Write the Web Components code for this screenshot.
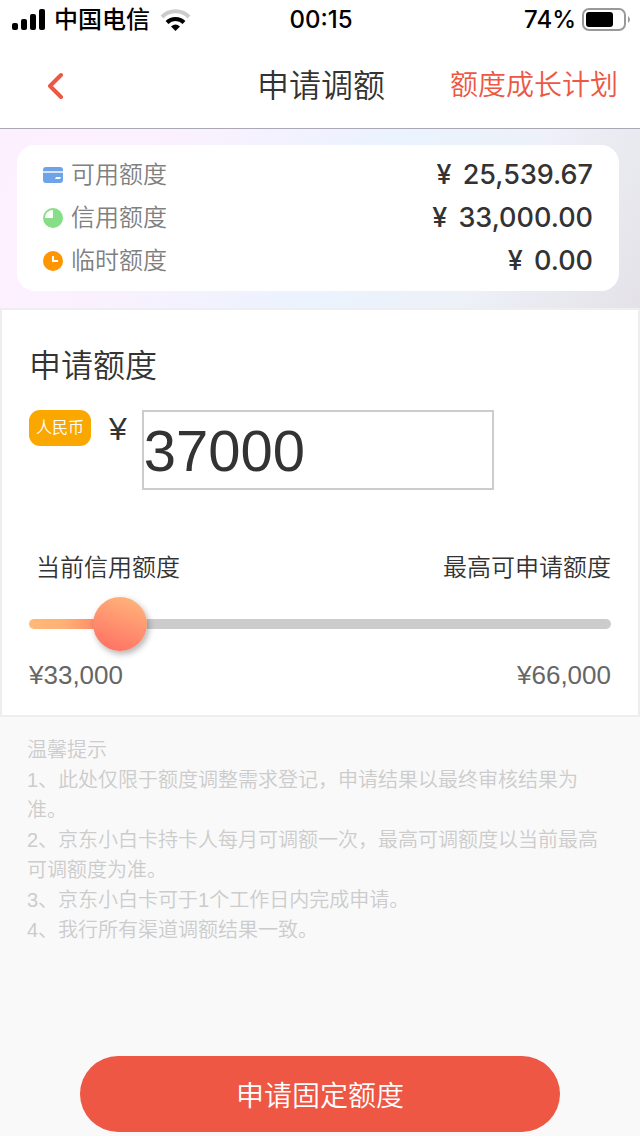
<!DOCTYPE html>
<html lang="zh-CN">
<head>
  <meta charset="UTF-8">
  <meta name="viewport" content="width=device-width, initial-scale=1">
  <title>申请调额</title>
  <style>
    :root {
      --brand: #ed5744;
      --ink: #333;
      --thin: 350;
      --font-num: Inter, "Noto Sans CJK SC", sans-serif;
    }
    body {
      margin: 0;
      background: #f9f9f9;
      color: var(--ink);
      font-family: "Liberation Sans", "Noto Sans CJK SC", sans-serif;
    }
  </style>
</head>
<body>
  <quota-page></quota-page>

  <script>
    class StatusBar extends HTMLElement {
      connectedCallback() {
        this.attachShadow({ mode: 'open' });
        this.shadowRoot.innerHTML = `
          <style>
            :host {
              display: grid;
              grid-template-columns: 1fr auto 1fr;
              align-items: center;
              height: 40px;
              padding: 0 10px 0 12px;
              background: #fff;
              color: #000;
              font: 500 24px/40px var(--font-num);
            }
            div { display: flex; align-items: center; }
            .left { gap: 9px; }
            .right { gap: 6px; justify-content: flex-end; }
            svg { display: block; }
          </style>
          <div class="left">
            <svg width="33" height="22" viewBox="0 0 33 22">
              <rect x="0" y="14" width="6" height="7" rx="2"/>
              <rect x="9" y="10" width="6" height="11" rx="2"/>
              <rect x="18" y="5" width="6" height="16" rx="2"/>
              <rect x="27" y="0" width="6" height="21" rx="2"/>
            </svg>
            <span>中国电信</span>
            <svg width="32" height="22" viewBox="-1 0 32 22">
              <path d="M2 8 A19 19 0 0 1 29 8" fill="none" stroke="#ccc" stroke-width="4"/>
              <path d="M7 13.500 A12 12 0 0 1 24 13.500" fill="none" stroke="#000" stroke-width="4"/>
              <path d="M15.500 22 L11 17.500 Q15.500 13.500 20 17.500 Z"/>
            </svg>
          </div>
          <span>00:15</span>
          <div class="right">
            <span>74%</span>
            <svg width="48" height="24" viewBox="0 0 48 24">
              <rect x="1" y="1" width="42" height="21" rx="6" fill="none" stroke="#999" stroke-width="2"/>
              <rect x="4" y="4" width="27" height="15" rx="3"/>
              <path d="M46 8 Q50 11.500 46 15 Z" fill="#999"/>
            </svg>
          </div>
        `;
      }
    }
    customElements.define('status-bar', StatusBar);

    class NavHeader extends HTMLElement {
      connectedCallback() {
        this.attachShadow({ mode: 'open' });
        this.shadowRoot.innerHTML = `
          <style>
            :host {
              display: grid;
              grid-template-columns: 1fr auto 1fr;
              align-items: center;
              height: 85px;
              padding: 3px 22px 0 24px;
              background: #fff;
              border-bottom: 1px solid #aaa8b4;
            }
            button {
              justify-self: start;
              display: flex;
              padding: 16px 24px;
              border: 0;
              background: none;
              cursor: pointer;
            }
            h1 { margin: 0; font-size: 32px; font-weight: var(--thin); line-height: 48px; }
            a {
              justify-self: end;
              color: var(--brand);
              font-size: 28px;
              font-weight: var(--thin);
              line-height: 44px;
              text-decoration: none;
              white-space: nowrap;
            }
          </style>
          <button type="button" aria-label="返回">
            <svg width="16" height="28" viewBox="0 0 16 28" fill="none" stroke="#ed5744" stroke-width="4" stroke-linecap="round" stroke-linejoin="round">
              <path d="M13 3 L2 14 L13 25"/>
            </svg>
          </button>
          <h1><slot></slot></h1>
          <a href="#plan">额度成长计划</a>
        `;
      }
    }
    customElements.define('nav-header', NavHeader);

    const icons = {
      card: `
        <path d="M0 6 Q0 3 3 3 H17 Q20 3 20 6 V7 H0 Z M0 9 H20 V16 Q20 19 17 19 H3 Q0 19 0 16 Z" fill="#6fa3e8"/>
        <path d="M0 7 H20 V9 H0 Z" fill="#d4e4fa"/>
        <path d="M13 13 H18 L17 15 H12 Z" fill="#fff"/>`,
      pie: `
        <circle cx="10" cy="11" r="10" fill="#86de86"/>
        <path d="M10 11 V3 A8 8 0 0 0 2 11 Z" fill="#fff"/>`,
      clock: `
        <circle cx="10" cy="11" r="10" fill="#ff9500"/>
        <path d="M10 6 V11 H15" fill="none" stroke="#fff" stroke-width="2"/>`
    };

    class QuotaRow extends HTMLElement {
      connectedCallback() {
        this.attachShadow({ mode: 'open' });
        this.shadowRoot.innerHTML = `
          <style>
            :host { display: flex; align-items: center; height: 43px; }
            svg { margin-right: 8px; }
            .label { flex: 1; color: #808080; font-size: 24px; font-weight: var(--thin); line-height: 43px; }
            .amount { font-family: var(--font-num); font-size: 27px; font-weight: 500; line-height: 43px; }
            .sign { margin-right: 4px; }
          </style>
          <svg width="20" height="22" viewBox="0 0 20 22" aria-hidden="true">${icons[this.getAttribute('icon')]}</svg>
          <span class="label">${this.getAttribute('label')}</span>
          <span class="amount"><span class="sign">¥</span> <slot></slot></span>
        `;
      }
    }
    customElements.define('quota-row', QuotaRow);

    class QuotaSummary extends HTMLElement {
      connectedCallback() {
        this.attachShadow({ mode: 'open' });
        this.shadowRoot.innerHTML = `
          <style>
            :host {
              display: block;
              padding: 16px 21px 17px 17px;
              background: linear-gradient(118deg, #fdf0fe 0%, #fbf1fe 25%, #eaf3fe 55%, #eef1f8 75%, #e4e2e8 100%);
            }
            .card {
              padding: 8px 26px 9px;
              background: #fff;
              border-radius: 18px;
            }
          </style>
          <div class="card"><slot></slot></div>
        `;
      }
    }
    customElements.define('quota-summary', QuotaSummary);

    class QuotaSlider extends HTMLElement {
      connectedCallback() {
        this.attachShadow({ mode: 'open' });
        this.shadowRoot.innerHTML = `
          <style>
            :host { display: block; }
            .row { display: flex; justify-content: space-between; }
            .labels { padding-left: 7px; font-size: 24px; font-weight: var(--thin); line-height: 36px; }
            .values { color: #666; font-size: 26px; line-height: 36px; }
            input {
              -webkit-appearance: none;
              appearance: none;
              display: block;
              width: 100%;
              height: 54px;
              margin: 11px 0 6px;
              background: none;
              outline: none;
            }
            input::-webkit-slider-runnable-track {
              height: 10px;
              border-radius: 5px;
              background: linear-gradient(90deg, #ffb978, #ffb074 40%, #ff7062) no-repeat 0 0 / var(--fill) 100%, #ccc;
            }
            input::-webkit-slider-thumb {
              -webkit-appearance: none;
              width: 54px;
              height: 54px;
              margin-top: -22px;
              border-radius: 50%;
              background: linear-gradient(20deg, #ff6b62, #ffae78 85%);
              box-shadow: 2px 3px 6px rgba(0,0,0,0.3);
            }
          </style>
          <div class="row labels"><label for="range">当前信用额度</label><span>最高可申请额度</span></div>
          <input id="range" type="range" min="33000" max="66000" step="1000" value="37000">
          <div class="row values"><span>¥33,000</span><span>¥66,000</span></div>
        `;
        this.range = this.shadowRoot.getElementById('range');
        this.range.addEventListener('input', () => {
          this.paint();
          this.dispatchEvent(new CustomEvent('quota-change', { detail: this.range.value }));
        });
        this.paint();
      }

      set value(v) {
        this.range.value = v;
        this.paint();
      }

      paint() {
        const { value, min, max } = this.range;
        this.range.style.setProperty('--fill', `calc(27px + (100% - 54px) * ${(value - min) / (max - min)})`);
      }
    }
    customElements.define('quota-slider', QuotaSlider);

    class QuotaForm extends HTMLElement {
      connectedCallback() {
        this.attachShadow({ mode: 'open' });
        this.shadowRoot.innerHTML = `
          <style>
            :host {
              display: block;
              padding: 32px 27px 22px;
              background: #fff;
              border: 2px solid #eee;
            }
            h2 { margin: 0 0 20px; font-size: 32px; font-weight: var(--thin); line-height: 48px; }
            .field { display: flex; align-items: flex-start; margin-bottom: 60px; }
            .badge {
              padding: 0 7px;
              border-radius: 11px;
              background: #faa800;
              color: #fff;
              font-size: 16px;
              font-weight: var(--thin);
              line-height: 36px;
            }
            label { margin: 0 15px 0 18px; font-size: 32px; line-height: 38px; }
            input {
              box-sizing: border-box;
              width: 55vw;
              height: 80px;
              padding: 0;
              border: 2px solid #ccc;
              border-radius: 0;
              color: var(--ink);
              font: 58px "Liberation Sans", sans-serif;
            }
          </style>
          <h2>申请额度</h2>
          <div class="field">
            <span class="badge">人民币</span>
            <label for="amount">¥</label>
            <input id="amount" type="text" inputmode="numeric" value="37000">
          </div>
          <quota-slider></quota-slider>
        `;
        const amount = this.shadowRoot.getElementById('amount');
        const slider = this.shadowRoot.querySelector('quota-slider');
        slider.addEventListener('quota-change', (e) => { amount.value = e.detail; });
        amount.addEventListener('change', () => { slider.value = amount.value; });
      }
    }
    customElements.define('quota-form', QuotaForm);

    class QuotaTips extends HTMLElement {
      connectedCallback() {
        this.attachShadow({ mode: 'open' });
        this.shadowRoot.innerHTML = `
          <style>
            :host {
              display: block;
              padding: 18px 27px;
              color: #ccc;
              font-size: 20px;
              font-weight: var(--thin);
              line-height: 30px;
            }
            p { margin: 0; }
          </style>
          <p>温馨提示</p>
          <p>1、此处仅限于额度调整需求登记，申请结果以最终审核结果为准。</p>
          <p>2、京东小白卡持卡人每月可调额一次，最高可调额度以当前最高可调额度为准。</p>
          <p>3、京东小白卡可于1个工作日内完成申请。</p>
          <p>4、我行所有渠道调额结果一致。</p>
        `;
      }
    }
    customElements.define('quota-tips', QuotaTips);

    class SubmitButton extends HTMLElement {
      connectedCallback() {
        this.attachShadow({ mode: 'open' });
        this.shadowRoot.innerHTML = `
          <style>
            :host { display: flex; justify-content: center; padding-bottom: 4px; }
            button {
              width: 75%;
              height: 76px;
              border: 0;
              border-radius: 38px;
              background: var(--brand);
              color: #fff;
              font: inherit;
              font-size: 28px;
              font-weight: var(--thin);
              cursor: pointer;
            }
          </style>
          <button type="button"><slot></slot></button>
        `;
      }
    }
    customElements.define('submit-button', SubmitButton);

    class QuotaPage extends HTMLElement {
      connectedCallback() {
        this.attachShadow({ mode: 'open' });
        this.shadowRoot.innerHTML = `
          <style>
            :host { display: flex; flex-direction: column; min-height: 100vh; }
            quota-tips { flex: 1; }
          </style>
          <status-bar></status-bar>
          <nav-header>申请调额</nav-header>
          <quota-summary>
            <quota-row icon="card" label="可用额度">25,539.67</quota-row>
            <quota-row icon="pie" label="信用额度">33,000.00</quota-row>
            <quota-row icon="clock" label="临时额度">0.00</quota-row>
          </quota-summary>
          <quota-form></quota-form>
          <quota-tips></quota-tips>
          <submit-button>申请固定额度</submit-button>
        `;
      }
    }
    customElements.define('quota-page', QuotaPage);
  </script>
</body>
</html>
